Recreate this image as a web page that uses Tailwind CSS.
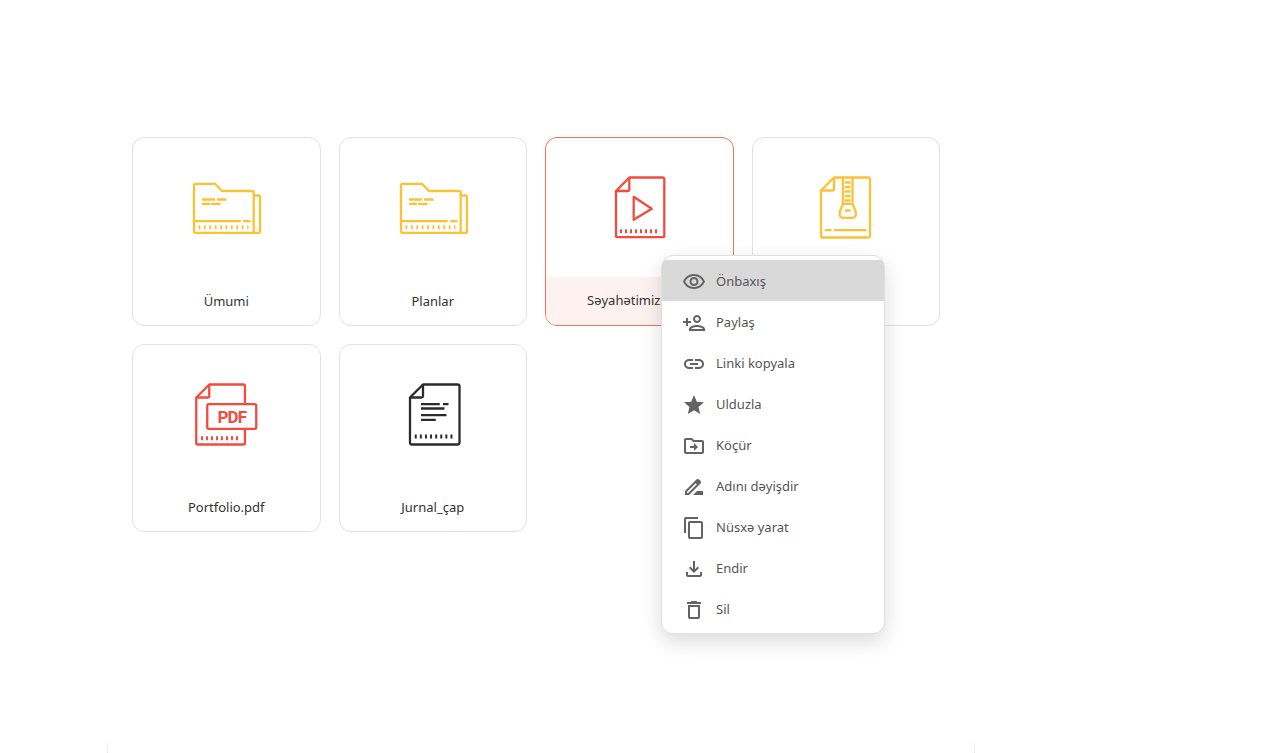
<!DOCTYPE html>
<html lang="en">
<head>
    <meta charset="UTF-8">
    <title>Fayllar</title>
    <script src="https://cdn.jsdelivr.net/npm/@tailwindcss/browser@4"></script>
</head>
<body class="bg-white h-[753px] overflow-hidden relative font-['Noto_Sans',sans-serif]">
    <div class="pt-[137px] pl-[132px]">
        <!-- Files -->
        <div class="grid grid-cols-4 gap-[18px] w-[808px]">
            <div class="h-[188.5px] flex flex-col border-[1.5px] border-[#e2e2e2] rounded-xl overflow-hidden">
                <div class="flex-1 flex items-center justify-center">
                    <svg class="w-20 h-20 translate-x-[0.5px] translate-y-[0.5px]" viewBox="0 0 80 80" fill="none" stroke="#fdc136" stroke-width="2.300" stroke-linejoin="round">
                        <path d="M9 16.300h19.500l7 7.200h30.200a1.500 1.500 0 0 1 1.500 1.500v38.800a1.500 1.500 0 0 1-1.500 1.500H9a1.500 1.500 0 0 1-1.500-1.500V17.800a1.500 1.500 0 0 1 1.500-1.500z"/>
                        <path d="M67.200 28h4.800a1.500 1.500 0 0 1 1.500 1.500v34.300a1.500 1.500 0 0 1-1.500 1.500h-4.800"/>
                        <path d="M7.500 53.700h46.700M56.500 53.700h7.500M15.500 32h13M30.500 32h9.500M15.500 36.300h8M24.500 36.300h9.500"/>
                        <path d="M12 59.700h50" stroke-width="4" stroke-dasharray="1.800 3.600"/>
                    </svg>
                </div>
                <div class="h-[48px] pt-[2px] flex items-center justify-center text-[13px] text-[#333]">Ümumi</div>
            </div>
            <div class="h-[188.5px] flex flex-col border-[1.5px] border-[#e2e2e2] rounded-xl overflow-hidden">
                <div class="flex-1 flex items-center justify-center">
                    <svg class="w-20 h-20 translate-x-[0.5px] translate-y-[0.5px]" viewBox="0 0 80 80" fill="none" stroke="#fdc136" stroke-width="2.300" stroke-linejoin="round">
                        <path d="M9 16.300h19.500l7 7.200h30.200a1.500 1.500 0 0 1 1.500 1.500v38.800a1.500 1.500 0 0 1-1.500 1.500H9a1.500 1.500 0 0 1-1.500-1.500V17.800a1.500 1.500 0 0 1 1.500-1.500z"/>
                        <path d="M67.200 28h4.800a1.500 1.500 0 0 1 1.500 1.500v34.300a1.500 1.500 0 0 1-1.500 1.500h-4.800"/>
                        <path d="M7.500 53.700h46.700M56.500 53.700h7.500M15.500 32h13M30.500 32h9.500M15.500 36.300h8M24.500 36.300h9.500"/>
                        <path d="M12 59.700h50" stroke-width="4" stroke-dasharray="1.800 3.600"/>
                    </svg>
                </div>
                <div class="h-[48px] pt-[2px] flex items-center justify-center text-[13px] text-[#333]">Planlar</div>
            </div>
            <div class="h-[188.5px] flex flex-col border border-[#f4705c] rounded-xl overflow-hidden">
                <div class="flex-1 flex items-center justify-center">
                    <svg class="w-20 h-20 translate-x-[0.5px] translate-y-[0.5px]" viewBox="0 0 80 80" fill="none" stroke="#f44b3f" stroke-width="2.300" stroke-linejoin="round">
                        <path d="M29.800 10h33.500a1.500 1.500 0 0 1 1.500 1.500v56.700a1.500 1.500 0 0 1-1.500 1.500H18a1.500 1.500 0 0 1-1.500-1.500V23.500z"/>
                        <path d="M29.800 10v12a1.500 1.500 0 0 1-1.500 1.500H16.500"/>
                        <path d="M34.200 29.300l18 12-18 11z"/>
                        <path d="M20.500 63.700h40" stroke-width="4" stroke-dasharray="2 3"/>
                    </svg>
                </div>
                <div class="h-[48px] flex items-center justify-center text-[13px] text-[#333] bg-[#fdf2f0]">Səyahətimiz.mp4</div>
            </div>
            <div class="h-[188.5px] flex flex-col border-[1.5px] border-[#e2e2e2] rounded-xl overflow-hidden">
                <div class="flex-1 flex items-center justify-center">
                    <svg class="w-20 h-20 translate-x-[0.5px] translate-y-[0.5px]" viewBox="0 0 80 80" fill="none" stroke="#fdc136" stroke-width="2.300" stroke-linejoin="round">
                        <path d="M27.500 10h34.500a1.500 1.500 0 0 1 1.500 1.500v57a1.500 1.500 0 0 1-1.500 1.500H16a1.500 1.500 0 0 1-1.500-1.500V23z"/>
                        <path d="M27.500 10v11.500a1.500 1.500 0 0 1-1.500 1.500H14.500"/>
                        <path d="M36.500 10v26.500M46 10v26.500"/>
                        <path d="M36.500 36.300h9.500c1 3 3.500 6 3.500 10.500a3.500 3.500 0 0 1-3.500 3.500h-9.500a3.500 3.500 0 0 1-3.500-3.500c0-4.500 2.500-7.500 3.500-10.500z"/>
                        <path d="M38.500 43h5.750M18.250 62.700H25M27.500 62.700H60"/>
                        <path d="M38.500 15h5.500M38.500 19.500h5.500M38.500 24h5.500M38.500 28.500h5.500M38.500 33h5.500"/>
                    </svg>
                </div>
                <div class="h-[48px]"></div>
            </div>
            <div class="h-[188.5px] flex flex-col border-[1.5px] border-[#e2e2e2] rounded-xl overflow-hidden">
                <div class="flex-1 flex items-center justify-center">
                    <svg class="w-20 h-20 translate-x-[0.5px]" viewBox="0 0 80 80" fill="none" stroke="#f44b3f" stroke-width="2.300" stroke-linejoin="round">
                        <path d="M58.450 30.200V12a1.500 1.500 0 0 0-1.500-1.500H22.750L9.750 23.500V69a1.500 1.500 0 0 0 1.500 1.500h45.700a1.500 1.500 0 0 0 1.500-1.500V54.800"/>
                        <path d="M22.750 10.500v11.500a1.500 1.500 0 0 1-1.500 1.500H9.750"/>
                        <rect x="20.750" y="30.200" width="49" height="24.600" rx="1.500"/>
                        <path d="M14.500 64.200h39.250" stroke-width="4" stroke-dasharray="2 3"/>
                        <text x="31" y="48.800" textLength="29.500" lengthAdjust="spacing" fill="#f44b3f" stroke="none" font-family="Roboto, sans-serif" font-weight="700" font-size="17">PDF</text>
                    </svg>
                </div>
                <div class="h-[48px] pt-[2px] flex items-center justify-center text-[13px] text-[#333]">Portfolio.pdf</div>
            </div>
            <div class="h-[188.5px] flex flex-col border-[1.5px] border-[#e2e2e2] rounded-xl overflow-hidden">
                <div class="flex-1 flex items-center justify-center">
                    <svg class="w-20 h-20 translate-x-[0.5px]" viewBox="0 0 80 80" fill="none" stroke="#2b2b2b" stroke-width="2.300" stroke-linejoin="round">
                        <path d="M29.500 10.500H64a2 2 0 0 1 2 2v56a2 2 0 0 1-2 2H18.500a2 2 0 0 1-2-2v-45z"/>
                        <path d="M29.500 10.500v11.500a1.500 1.500 0 0 1-1.500 1.500H16.500"/>
                        <path d="M27.500 30.200h18.750M49.500 30.200H55M27.500 34.500H51M27.500 41.200H53M27.500 45.800h14.750"/>
                        <path d="M21.250 62.500h39.250" stroke-width="4" stroke-dasharray="2 3.100"/>
                    </svg>
                </div>
                <div class="h-[48px] pt-[2px] flex items-center justify-center text-[13px] text-[#333]">Jurnal_çap</div>
            </div>
        </div>

        <!-- Faint edges of the panel below -->
        <div class="absolute left-[107px] top-[738px] w-[868px] h-[15px] flex justify-between">
            <div class="w-px bg-linear-to-b from-white to-[#e6e6e6]"></div>
            <div class="w-px bg-linear-to-b from-white to-[#e6e6e6]"></div>
        </div>
    </div>

    <!-- Context menu -->
    <div class="absolute left-[661px] top-[255px] w-[224px] h-[379px] pt-[4px] bg-white border border-[#e0e0e0] rounded-xl shadow-[0_8px_20px_rgba(0,0,0,0.14)] overflow-hidden text-[13px] text-[#555]">
        <div class="h-[41px] pt-[2px] flex items-center gap-[10px] pl-[20px] bg-[#d9d9d9]">
            <svg class="w-6 h-6" viewBox="0 0 24 24" fill="#636363"><path d="M12 6c3.790 0 7.170 2.130 8.820 5.500C19.170 14.870 15.790 17 12 17s-7.170-2.130-8.820-5.500C4.830 8.130 8.210 6 12 6m0-2C7 4 2.730 7.110 1 11.500 2.730 15.890 7 19 12 19s9.270-3.110 11-7.500C21.270 7.110 17 4 12 4zm0 5c1.380 0 2.500 1.120 2.500 2.500S13.380 14 12 14s-2.500-1.120-2.500-2.500S10.620 9 12 9m0-2c-2.480 0-4.500 2.020-4.500 4.500S9.520 16 12 16s4.500-2.020 4.500-4.500S14.480 7 12 7z"/></svg>
            <span>Önbaxış</span>
        </div>
        <div class="h-[41px] pt-[2px] flex items-center gap-[10px] pl-[20px]">
            <svg class="w-6 h-6" viewBox="0 0 24 24" fill="#636363"><path d="M15 12c2.210 0 4-1.790 4-4s-1.790-4-4-4-4 1.790-4 4 1.790 4 4 4zm0-6c1.100 0 2 .9 2 2s-.9 2-2 2-2-.9-2-2 .9-2 2-2zm0 8c-2.670 0-8 1.340-8 4v2h16v-2c0-2.660-5.330-4-8-4zm-6 4c.22-.72 3.310-2 6-2 2.700 0 5.800 1.290 6 2H9zm-3-3v-3h3v-2H6V7H4v3H1v2h3v3z"/></svg>
            <span>Paylaş</span>
        </div>
        <div class="h-[41px] pt-[2px] flex items-center gap-[10px] pl-[20px]">
            <svg class="w-6 h-6" viewBox="0 0 24 24" fill="#636363"><path d="M3.900 12c0-1.710 1.390-3.100 3.100-3.100h4V7H7c-2.760 0-5 2.240-5 5s2.240 5 5 5h4v-1.900H7c-1.710 0-3.100-1.390-3.100-3.100zM8 13h8v-2H8v2zm9-6h-4v1.900h4c1.710 0 3.100 1.390 3.100 3.100s-1.390 3.100-3.100 3.100h-4V17h4c2.760 0 5-2.240 5-5s-2.240-5-5-5z"/></svg>
            <span>Linki kopyala</span>
        </div>
        <div class="h-[41px] pt-[2px] flex items-center gap-[10px] pl-[20px]">
            <svg class="w-6 h-6" viewBox="0 0 24 24" fill="#636363"><path d="M12 17.270L18.180 21l-1.640-7.030L22 9.240l-7.190-.61L12 2 9.190 8.630 2 9.240l5.460 4.730L5.820 21z"/></svg>
            <span>Ulduzla</span>
        </div>
        <div class="h-[41px] pt-[2px] flex items-center gap-[10px] pl-[20px]">
            <svg class="w-6 h-6" viewBox="0 0 24 24" fill="#636363"><path d="M20 6h-8l-2-2H4c-1.100 0-1.990.9-1.990 2L2 18c0 1.100.9 2 2 2h16c1.100 0 2-.9 2-2V8c0-1.100-.9-2-2-2zm0 12H4V6h5.170l2 2H20v10zm-8-4H8v-2h4V9l4 4-4 4v-3z"/></svg>
            <span>Köçür</span>
        </div>
        <div class="h-[41px] pt-[2px] flex items-center gap-[10px] pl-[20px]">
            <svg class="w-6 h-6" viewBox="0 0 24 24" fill="#636363"><path d="M18.410 5.800L17.200 4.590c-.78-.78-2.050-.78-2.830 0l-2.680 2.680L3 15.960V20h4.040l8.740-8.740 2.630-2.630c.79-.78.79-2.050 0-2.830zM6.210 18H5v-1.210l8.660-8.660 1.210 1.210L6.210 18zM11 20l4-4h6v4H11z"/></svg>
            <span>Adını dəyişdir</span>
        </div>
        <div class="h-[41px] pt-[2px] flex items-center gap-[10px] pl-[20px]">
            <svg class="w-6 h-6" viewBox="0 0 24 24" fill="#636363"><path d="M16 1H4c-1.100 0-2 .9-2 2v14h2V3h12V1zm3 4H8c-1.100 0-2 .9-2 2v14c0 1.100.9 2 2 2h11c1.100 0 2-.9 2-2V7c0-1.100-.9-2-2-2zm0 16H8V7h11v14z"/></svg>
            <span>Nüsxə yarat</span>
        </div>
        <div class="h-[41px] pt-[2px] flex items-center gap-[10px] pl-[20px]">
            <svg class="w-6 h-6" viewBox="0 0 24 24" fill="#636363"><path d="M18 15v3H6v-3H4v3c0 1.100.9 2 2 2h12c1.100 0 2-.9 2-2v-3h-2zm-1-4l-1.410-1.410L13 12.170V4h-2v8.170L8.410 9.590 7 11l5 5 5-5z"/></svg>
            <span>Endir</span>
        </div>
        <div class="h-[41px] pt-[2px] flex items-center gap-[10px] pl-[20px]">
            <svg class="w-6 h-6" viewBox="0 0 24 24" fill="#636363"><path d="M16 9v10H8V9h8m-1.500-6h-5l-1 1H5v2h14V4h-3.500l-1-1zM18 7H6v12c0 1.100.9 2 2 2h8c1.100 0 2-.9 2-2V7z"/></svg>
            <span>Sil</span>
        </div>
    </div>
</body>
</html>
